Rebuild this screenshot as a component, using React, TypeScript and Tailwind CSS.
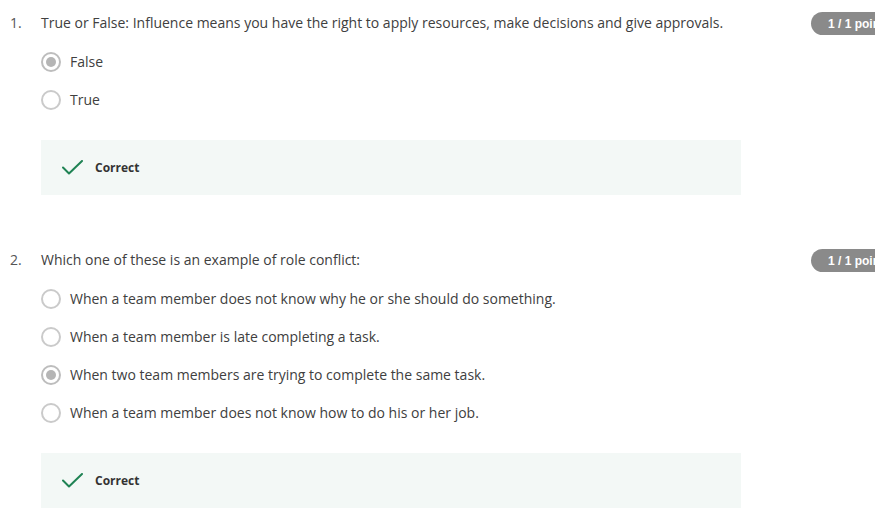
import React from "react";

type Q = { n: string; text: string; options: string[]; selected: number };

const questions: Q[] = [
  {
    n: "1.",
    text: "True or False: Influence means you have the right to apply resources, make decisions and give approvals.",
    options: ["False", "True"],
    selected: 0,
  },
  {
    n: "2.",
    text: "Which one of these is an example of role conflict:",
    options: [
      "When a team member does not know why he or she should do something.",
      "When a team member is late completing a task.",
      "When two team members are trying to complete the same task.",
      "When a team member does not know how to do his or her job.",
    ],
    selected: 2,
  },
];

function Radio({ checked }: { checked: boolean }) {
  return (
    <span
      className={
        "flex h-[20px] w-[20px] shrink-0 items-center justify-center rounded-full border-2 bg-white " +
        (checked ? "border-[#bdbdbd]" : "border-[#cacaca]")
      }
    >
      {checked && <span className="block h-[10px] w-[10px] rounded-full bg-[#b5b5b5]" />}
    </span>
  );
}

function Check() {
  return (
    <svg width="21" height="15" viewBox="0 0 21 15" fill="none">
      <path d="M1 7.5 L7 13.5 L20 1" stroke="#1f8354" strokeWidth="2" strokeLinecap="round" strokeLinejoin="round" />
    </svg>
  );
}

function Question({ q, first }: { q: Q; first: boolean }) {
  return (
    <div className={"flex items-start " + (first ? "pt-[13px]" : "pt-[55px]")}>
      <div className="w-[31px] shrink-0 text-[14px] leading-[20px] text-[#555]">{q.n}</div>
      <div className="flex w-[700px] shrink-0 flex-col">
        <div className="text-[14px] leading-[20px] text-[#404040]">{q.text}</div>
        <div className="mt-[19px] flex flex-col gap-[18px]">
          {q.options.map((o, i) => (
            <div key={i} className="flex h-[20px] items-center gap-[9px]">
              <Radio checked={i === q.selected} />
              <span className="text-[14px] leading-[20px] text-[#404040]">{o}</span>
            </div>
          ))}
        </div>
        <div className="mt-[30px] flex h-[55px] items-center bg-[#f3f8f6] pl-[21px]">
          <Check />
          <span className="ml-[12px] text-[12px] font-bold text-[#333]">Correct</span>
        </div>
      </div>
      <div className="-mt-[1px] ml-[70px] flex h-[23px] shrink-0 items-center whitespace-nowrap rounded-full bg-[#8a8a8a] pl-[17px] pr-[14px] text-[12px] font-bold text-white [font-family:'Liberation_Sans',Arial,sans-serif]">
        1 / 1 point
      </div>
    </div>
  );
}

export default function App() {
  return (
    <div className="h-[523px] w-[875px] overflow-hidden bg-white [font-family:'Open_Sans',sans-serif]">
      <div className="w-[960px] pl-[10px]">
        {questions.map((q, i) => (
          <Question key={i} q={q} first={i === 0} />
        ))}
      </div>
    </div>
  );
}
